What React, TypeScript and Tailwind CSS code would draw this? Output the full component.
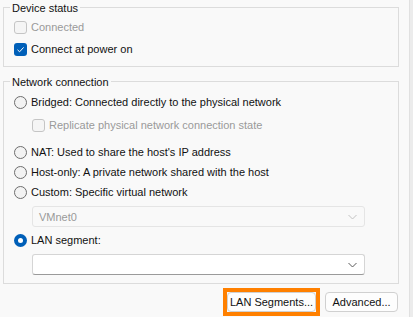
import React from 'react';

const font = { fontFamily: '"Liberation Sans", Arial, sans-serif' };

const Check = ({ checked, disabled }: { checked?: boolean; disabled?: boolean }) =>
  checked ? (
    <span className="flex h-[13px] w-[13px] shrink-0 items-center justify-center rounded-[3px] bg-[#005fb8]">
      <svg width="9" height="9" viewBox="0 0 9 9">
        <path d="M1.5 4.8 L3.6 6.8 L7.6 2.4" fill="none" stroke="#fff" strokeWidth="1" />
      </svg>
    </span>
  ) : (
    <span
      className={`h-[13px] w-[13px] shrink-0 rounded-[3px] border ${
        disabled ? 'border-[#c5c5c5] bg-[#f5f5f5]' : 'border-[#8a8a8a] bg-[#f3f3f3]'
      }`}
    />
  );

const Radio = ({ checked }: { checked?: boolean }) =>
  checked ? (
    <span className="flex h-[13px] w-[13px] shrink-0 items-center justify-center rounded-full bg-[#005fb8]">
      <span className="h-[5px] w-[5px] rounded-full bg-white" />
    </span>
  ) : (
    <span className="h-[13px] w-[13px] shrink-0 rounded-full border border-[#6e6e6e] bg-[#f3f3f3]" />
  );

const Chevron = ({ color }: { color: string }) => (
  <svg width="9" height="6" viewBox="0 0 9 6">
    <path d="M0.5 1 L4.5 5 L8.5 1" fill="none" stroke={color} strokeWidth="1" />
  </svg>
);

const Row = ({ children, muted }: { children: React.ReactNode; muted?: boolean }) => (
  <div className={`flex h-[20px] items-center gap-[4px] whitespace-nowrap ${muted ? 'text-[#9a9a9a]' : 'text-[#111]'}`}>
    {children}
  </div>
);

export default function App() {
  return (
    <div className="flex h-[317px] w-[413px] bg-[#f9f9f9] text-[11px] leading-[14px] text-[#111]" style={font}>
      <div className="flex flex-1 flex-col pl-[3px] pr-[10px]">
        <fieldset className="border border-[#dcdcdc]">
          <legend className="ml-[6px] px-[2px] pt-[1px]">Device status</legend>
          <div className="flex flex-col gap-[2px] px-[10px] pt-[2px] pb-[7px]">
            <Row muted>
              <Check disabled />
              <span>Connected</span>
            </Row>
            <Row>
              <Check checked />
              <span>Connect at power on</span>
            </Row>
          </div>
        </fieldset>

        <fieldset className="mt-[7px] border border-[#dcdcdc]">
          <legend className="ml-[6px] px-[2px] pt-[1px]">Network connection</legend>
          <div className="px-[10px] pt-[3px] pb-[8px]">
            <Row>
              <Radio />
              <span>Bridged: Connected directly to the physical network</span>
            </Row>
            <div className="mt-[3px] mb-[7px] pl-[18px]">
              <Row muted>
                <Check disabled />
                <span>Replicate physical network connection state</span>
              </Row>
            </div>
            <Row>
              <Radio />
              <span>NAT: Used to share the host's IP address</span>
            </Row>
            <Row>
              <Radio />
              <span>Host-only: A private network shared with the host</span>
            </Row>
            <Row>
              <Radio />
              <span>Custom: Specific virtual network</span>
            </Row>
            <div className="mt-[4px] ml-[18px] mr-[23px] flex h-[21px] items-center justify-between rounded-[3px] border border-[#e5e5e5] bg-[#f9f9f9] pl-[6px] pr-[7px] text-[#9a9a9a]">
              <span>VMnet0</span>
              <Chevron color="#c2c2c2" />
            </div>
            <div className="mt-[3px]">
              <Row>
                <Radio checked />
                <span>LAN segment:</span>
              </Row>
            </div>
            <div className="mt-[4px] ml-[18px] mr-[23px] flex h-[21px] items-center justify-end rounded-[3px] border border-[#d5d5d5] border-b-[#9a9a9a] bg-white pr-[7px]">
              <Chevron color="#5a5a5a" />
            </div>
          </div>
        </fieldset>

        <div className="mt-[4px] flex justify-end gap-[5px] pr-[1px]">
          <div className="border-[4px] border-[#ff8000]">
            <button className="flex h-[20px] w-[89px] items-center justify-center whitespace-nowrap rounded-[4px] border border-[#d0d0d0] bg-[#fdfdfd]">
              LAN Segments...
            </button>
          </div>
          <div className="pt-[4px]">
            <button className="flex h-[20px] w-[73px] items-center justify-center whitespace-nowrap rounded-[4px] border border-[#d0d0d0] bg-[#fdfdfd]">
              Advanced...
            </button>
          </div>
        </div>
      </div>
      <div className="w-[4px] border-l border-[#e0e0e0] bg-[#ececec]" />
    </div>
  );
}
